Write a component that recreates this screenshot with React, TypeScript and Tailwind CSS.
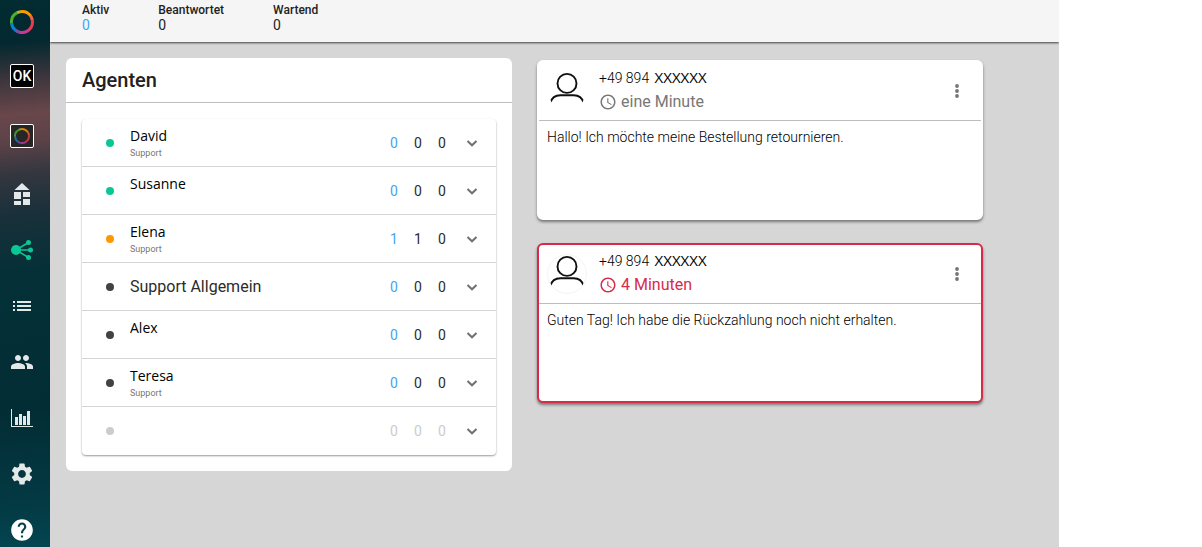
import { useState } from "react";
import { MdAccessTime, MdHelp, MdList, MdPeople, MdSettings } from "react-icons/md";

type Status = "online" | "busy" | "offline" | "disabled";

interface Agent {
  id: number;
  name: string;
  role?: string;
  isGroup?: boolean;
  status: Status;
  counts: number[];
}

interface Ticket {
  id: number;
  prefix: string;
  number: string;
  waiting: string;
  message: string;
  urgent: boolean;
}

const agents: Agent[] = [
  { id: 1, name: "David", role: "Support", status: "online", counts: [0, 0, 0] },
  { id: 2, name: "Susanne", status: "online", counts: [0, 0, 0] },
  { id: 3, name: "Elena", role: "Support", status: "busy", counts: [1, 1, 0] },
  { id: 4, name: "Support Allgemein", isGroup: true, status: "offline", counts: [0, 0, 0] },
  { id: 5, name: "Alex", status: "offline", counts: [0, 0, 0] },
  { id: 6, name: "Teresa", role: "Support", status: "offline", counts: [0, 0, 0] },
  { id: 7, name: "", status: "disabled", counts: [0, 0, 0] },
];

const tickets: Ticket[] = [
  {
    id: 1,
    prefix: "+49 894",
    number: "XXXXXX",
    waiting: "eine Minute",
    message: "Hallo! Ich möchte meine Bestellung retournieren.",
    urgent: false,
  },
  {
    id: 2,
    prefix: "+49 894",
    number: "XXXXXX",
    waiting: "4 Minuten",
    message: "Guten Tag! Ich habe die Rückzahlung noch nicht erhalten.",
    urgent: true,
  },
];

const stats = [
  { label: "Aktiv", value: 0, active: true },
  { label: "Beantwortet", value: 0, active: false },
  { label: "Wartend", value: 0, active: false },
];

const statusColors: Record<Status, string> = {
  online: "bg-[#0bc795]",
  busy: "bg-[#ff9800]",
  offline: "bg-[#424242]",
  disabled: "bg-[#cccccc]",
};

const RingLogo = ({ className }: { className: string }) => (
  <svg viewBox="0 0 24 24" fill="none" strokeWidth="3" className={className}>
    <path d="M7 2.9A10.5 10.5 0 0 1 12 1.5" stroke="#c9b01c" />
    <path d="M11.8 1.5A10.5 10.5 0 0 1 20.6 5.9" stroke="#ff9800" />
    <path d="M20.4 5.7A10.5 10.5 0 0 1 22.4 10.5" stroke="#f5653a" />
    <path d="M22.3 10.2A10.5 10.5 0 0 1 18.5 20.3" stroke="#e83a4b" />
    <path d="M18.7 20.1A10.5 10.5 0 0 1 9.8 22.3" stroke="#cf3591" />
    <path d="M10.2 22.4A10.5 10.5 0 0 1 5.2 20" stroke="#7551a8" />
    <path d="M5.4 20.2A10.5 10.5 0 0 1 1.5 12.6" stroke="#0a84d0" />
    <path d="M1.5 13A10.5 10.5 0 0 1 7.2 2.7" stroke="#4caf2f" />
  </svg>
);

const HomeIcon = () => (
  <svg viewBox="0 0 16 22" fill="currentColor" className="h-[22px] w-4">
    <path d="M8 0l7.5 7H.5zM0 9h7v7H0zM9 9h7v5H9zM0 18h7v4H0zM9 16h7v6H9z" />
  </svg>
);

const HubIcon = () => (
  <svg viewBox="0 0 22 20" fill="currentColor" className="h-5 w-[22px] text-[#0bc795]">
    <path d="M5 10L17.500 2.500M5 10H19.500M5 10L17.500 17.500" stroke="currentColor" strokeWidth="1.500" />
    <circle cx="5" cy="10" r="5" />
    <circle cx="17.500" cy="2.500" r="2.500" />
    <circle cx="19.500" cy="10" r="2.500" />
    <circle cx="17.500" cy="17.500" r="2.500" />
  </svg>
);

const ChartIcon = () => (
  <svg viewBox="0 0 22 18" fill="currentColor" className="h-[18px] w-[22px]">
    <path d="M0 0h1v17h21v1H0zM4 8h3v8H4zM8 5h3v11H8zM12 7h3v9h-3zM16 2h3v14h-3z" />
  </svg>
);

const ChevronIcon = () => (
  <svg viewBox="0 0 20 20" fill="none" stroke="currentColor" strokeWidth="2" className="size-5">
    <path d="M5.500 8L10 12.300L14.500 8" />
  </svg>
);

const MenuIcon = () => (
  <svg viewBox="0 0 20 20" fill="currentColor" className="size-5">
    <circle cx="10" cy="5" r="1.900" />
    <circle cx="10" cy="10" r="1.900" />
    <circle cx="10" cy="15" r="1.900" />
  </svg>
);

const Avatar = ({ ringed }: { ringed: boolean }) => (
  <svg
    viewBox="0 0 40 40"
    fill="none"
    stroke="#111111"
    strokeWidth="2"
    className={`size-10 rounded-full border ${ringed ? "border-gray-100" : "border-white"}`}
  >
    <circle cx="20" cy="12" r="10" />
    <path d="M2.500 32.500C4 27 8 24.500 13 24.500H27C32 24.500 36 27 37.500 32.500" />
  </svg>
);

const navItems = [
  { label: "Startseite", icon: <HomeIcon /> },
  { label: "Verteilung", icon: <HubIcon /> },
  { label: "Liste", icon: <MdList className="size-6" /> },
  { label: "Kontakte", icon: <MdPeople className="size-6" /> },
  { label: "Statistik", icon: <ChartIcon /> },
  { label: "Einstellungen", icon: <MdSettings className="size-[26px]" /> },
  { label: "Hilfe", icon: <MdHelp className="size-[26px] text-white" /> },
];

const Sidebar = () => (
  <nav className="flex h-screen w-[50px] shrink-0 flex-col items-center overflow-hidden bg-linear-[175deg,#022b32_0%,#04282f_8%,#38343b_14%,#69474b_21%,#5b4247_26%,#33363f_32%,#1a303a_39%,#043038_50%,#032d34_75%,#033a44_92%,#034651_100%] pr-1.5 text-[#e3e8e9]">
    <a href="#" aria-label="Logo" className="mb-0.5 flex h-11 shrink-0 items-center">
      <RingLogo className="size-6" />
    </a>
    <a href="#" className="flex h-15 shrink-0 items-center">
      <span className="flex size-6 items-center justify-center rounded-xs border border-white bg-black text-sm font-medium text-white">
        OK
      </span>
    </a>
    <a href="#" aria-label="Kanal" className="flex h-15 shrink-0 items-center">
      <span className="flex size-6 items-center justify-center rounded-xs border border-white bg-[#262626]">
        <RingLogo className="size-4 opacity-80" />
      </span>
    </a>
    {navItems.map((item) => (
      <a
        key={item.label}
        href="#"
        aria-label={item.label}
        className="flex h-14 shrink-0 items-center justify-center"
      >
        {item.icon}
      </a>
    ))}
  </nav>
);

const AgentRow = ({ agent }: { agent: Agent }) => {
  const [open, setOpen] = useState(false);
  const disabled = agent.status === "disabled";

  return (
    <li className="flex h-12 items-center border-b border-[#d4d4d4] pr-3.5 pl-6 last:border-b-0">
      <span className={`size-2 shrink-0 rounded-full ${statusColors[agent.status]}`} />
      {agent.isGroup ? (
        <span className="ml-4 flex-1 text-base text-[#2b2b2b]">{agent.name}</span>
      ) : (
        <div className="ml-4 flex h-9 flex-1 flex-col">
          <span className="font-['Open_Sans',sans-serif] text-sm leading-[22px] text-black">
            {agent.name}
          </span>
          <span className="text-[9px] leading-3 text-[#777777]">{agent.role}</span>
        </div>
      )}
      <div className="mr-2 flex text-sm">
        {agent.counts.map((count, i) => (
          <span
            key={i}
            className={`w-6 text-center ${
              disabled ? "text-[#cccccc]" : i === 0 ? "text-[#42a5f5]" : "text-[#2b2b2b]"
            }`}
          >
            {count}
          </span>
        ))}
      </div>
      <button
        aria-label="Details"
        aria-expanded={open}
        onClick={() => setOpen(!open)}
        className="text-[#707070]"
      >
        <ChevronIcon />
      </button>
    </li>
  );
};

const TicketCard = ({ ticket }: { ticket: Ticket }) => (
  <article
    className={`flex h-40 flex-col rounded-md border-2 bg-white shadow-[0_2px_3px_rgba(0,0,0,0.45)] ${
      ticket.urgent ? "border-[#d62b4b]" : "border-white"
    }`}
  >
    <header className="flex h-[59px] shrink-0 items-center border-b border-[#bdbdbd] pr-3.5 pl-2">
      <Avatar ringed={ticket.urgent} />
      <div className="ml-3 flex-1 pb-1">
        <p className="text-sm leading-6 font-light text-black">
          {ticket.prefix}{" "}
          <span className="ml-0.5 font-['Open_Sans',sans-serif] text-[15px] font-normal">
            {ticket.number}
          </span>
        </p>
        <p
          className={`flex items-center gap-1 text-base leading-6 ${
            ticket.urgent ? "text-[#d62b4b]" : "text-[#777777]"
          }`}
        >
          <MdAccessTime className="size-[18px]" />
          {ticket.waiting}
        </p>
      </div>
      <button aria-label="Menü" className="text-[#757575]">
        <MenuIcon />
      </button>
    </header>
    <p className="px-2 py-1.5 text-sm font-light text-black">{ticket.message}</p>
  </article>
);

const App = () => {
  return (
    <div className="flex h-screen overflow-hidden bg-white font-[Roboto,sans-serif]">
      <Sidebar />
      <div className="flex max-w-[1009px] flex-1 flex-col overflow-hidden bg-[#d6d6d6]">
        <header className="flex h-[42px] shrink-0 gap-[49px] bg-[#f5f5f5] pt-0.5 pl-8 shadow-[0_1px_2px_rgba(0,0,0,0.7)]">
          {stats.map((stat) => (
            <div key={stat.label} className="text-[#222222]">
              <p className="text-xs leading-4 font-medium">{stat.label}</p>
              <p className={`text-sm leading-3.5 ${stat.active ? "text-[#42a5f5]" : ""}`}>
                {stat.value}
              </p>
            </div>
          ))}
        </header>
        <main className="grid grid-cols-2 items-start gap-[25px] py-4 pr-[76px] pl-4">
          <section className="rounded-md bg-white">
            <h1 className="h-[45px] border-b border-[#bdbdbd] pl-4 text-xl leading-11 font-medium text-[#222222]">
              Agenten
            </h1>
            <ul className="m-4 rounded-sm shadow-[0_1px_2px_rgba(0,0,0,0.4)]">
              {agents.map((agent) => (
                <AgentRow key={agent.id} agent={agent} />
              ))}
            </ul>
          </section>
          <section className="flex flex-col gap-[23px] pt-0.5">
            {tickets.map((ticket) => (
              <TicketCard key={ticket.id} ticket={ticket} />
            ))}
          </section>
        </main>
      </div>
    </div>
  );
};

export default App;
